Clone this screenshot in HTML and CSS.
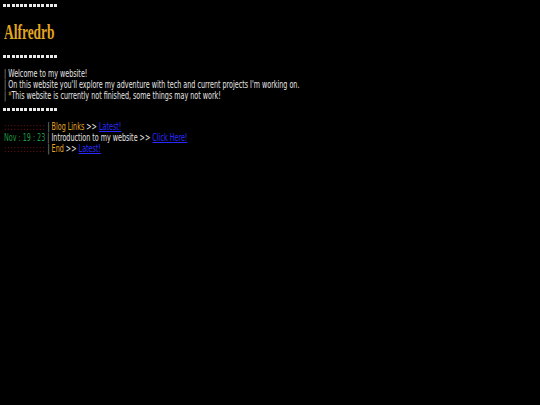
FILE: index.html
```html
<!DOCTYPE html>
<html>
<head>
<meta charset="utf-8">
<link rel="stylesheet" href="styles.css">
</head>
<body>
<div class="page">
  <div class="dots"><i></i><i></i><i></i><i></i><i></i><i></i><i></i><i></i><i></i><i></i><i></i><i></i><i></i></div>
  <h1 class="title"><span class="sq-title">Alfredrb</span></h1>
  <div class="dots"><i></i><i></i><i></i><i></i><i></i><i></i><i></i><i></i><i></i><i></i><i></i><i></i><i></i></div>
  <div class="intro">
    <div class="line"><span class="sq"><span class="pipe">|</span> Welcome to my website!</span></div>
    <div class="line"><span class="sq"><span class="pipe">|</span> On this website you'll explore my adventure with tech and current projects I'm working on.</span></div>
    <div class="line"><span class="sq"><span class="pipe">|</span> <span class="gold">*</span>This website is currently not finished, some things may not work!</span></div>
  </div>
  <div class="dots"><i></i><i></i><i></i><i></i><i></i><i></i><i></i><i></i><i></i><i></i><i></i><i></i><i></i></div>
  <div class="log">
    <div class="line"><span class="sq"><span class="red">:::::::::::::</span> <span class="pipe">|</span> <span class="gold">Blog Links</span> &gt;&gt; <a href="#" class="link">Latest!</a></span></div>
    <div class="line"><span class="sq"><span class="green">Nov : 19 : 23</span> <span class="pipe">|</span> Introduction to my website &gt;&gt; <a href="#" class="link">Click Here!</a></span></div>
    <div class="line"><span class="sq"><span class="red">:::::::::::::</span> <span class="pipe">|</span> <span class="gold">End</span> &gt;&gt; <a href="#" class="link">Latest!</a></span></div>
  </div>
</div>
</body>
</html>
```

FILE: styles.css
```css
html, body {
  margin: 0;
  padding: 0;
  background: #000;
}
body {
  color: #e6e6e6;
  font-family: "DejaVu Sans", Verdana, sans-serif;
  font-size: 10px;
}
.page {
  padding: 4px 3px;
}
.dots {
  display: flex;
  gap: 1.25px;
  height: 3px;
}
.dots i {
  display: block;
  width: 3px;
  height: 3px;
  background: #e8e8e8;
}
.title {
  margin: 13px 0 11px 1px;
  height: 24px;
  font-family: "Liberation Serif", "Times New Roman", serif;
  font-size: 21px;
  font-weight: bold;
  line-height: 24px;
  color: #e3a624;
}
.sq-title {
  display: inline-block;
  transform: scaleX(0.64);
  transform-origin: 0 0;
}
.intro {
  margin: 10px 0 7px 1px;
}
.log {
  margin: 10px 0 0 1px;
}
.line {
  height: 11px;
  line-height: 11px;
  white-space: nowrap;
}
.sq {
  display: inline-block;
  transform: scaleX(0.64);
  transform-origin: 0 0;
}
.pipe { color: #b0b0b0; }
.gold { color: #e3a624; }
.red {
  color: #8a1c1c;
  letter-spacing: 1.6px;
}
.green { color: #1f9a40; }
.link { color: #2a2aff; }
```
